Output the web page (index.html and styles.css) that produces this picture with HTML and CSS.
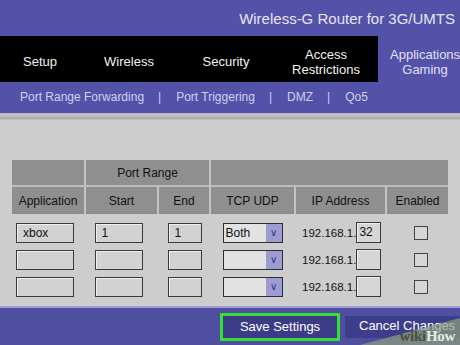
FILE: index.html
```html
<!DOCTYPE html>
<html lang="en">
<head>
    <meta charset="UTF-8">
    <title>Applications &amp; Gaming</title>
    <link rel="stylesheet" href="styles.css">
</head>
<body>
    <div class="page">
        <div class="top">Wireless-G Router for 3G/UMTS</div>

        <div class="nav">
            <div class="tabs">
                <div class="tab w-setup">Setup</div>
                <div class="tab w-wireless">Wireless</div>
                <div class="tab w-security">Security</div>
                <div class="tab w-access">Access<br>Restrictions</div>
            </div>
            <div class="tab active">Applications<br>Gaming</div>
        </div>

        <div class="subnav">
            <span>Port Range Forwarding</span><span class="sep">|</span>
            <span>Port Triggering</span><span class="sep">|</span>
            <span>DMZ</span><span class="sep">|</span>
            <span>Qo5</span>
        </div>

        <div class="strip"></div>

        <div class="content">
            <table class="ports">
                <colgroup>
                    <col style="width: 73px">
                    <col style="width: 73px">
                    <col style="width: 52px">
                    <col style="width: 85px">
                    <col style="width: 91px">
                    <col style="width: 62px">
                </colgroup>
                <tr class="head1">
                    <th class="first"></th>
                    <th colspan="2">Port Range</th>
                    <th colspan="3"></th>
                </tr>
                <tr class="head2">
                    <th class="first">Application</th>
                    <th>Start</th>
                    <th>End</th>
                    <th>TCP UDP</th>
                    <th>IP Address</th>
                    <th>Enabled</th>
                </tr>
                <tr class="gap"><td colspan="6"></td></tr>
                <tr>
                    <td><div class="box app">xbox</div></td>
                    <td class="c"><div class="box start">1</div></td>
                    <td class="c"><div class="box end">1</div></td>
                    <td class="c"><div class="sel"><span>Both</span><i>&#8744;</i></div></td>
                    <td><div class="ip">192.168.1.<div class="box oct">32</div></div></td>
                    <td class="c"><div class="check"></div></td>
                </tr>
                <tr>
                    <td><div class="box app"></div></td>
                    <td class="c"><div class="box start"></div></td>
                    <td class="c"><div class="box end"></div></td>
                    <td class="c"><div class="sel"><span></span><i>&#8744;</i></div></td>
                    <td><div class="ip">192.168.1.<div class="box oct"></div></div></td>
                    <td class="c"><div class="check"></div></td>
                </tr>
                <tr>
                    <td><div class="box app"></div></td>
                    <td class="c"><div class="box start"></div></td>
                    <td class="c"><div class="box end"></div></td>
                    <td class="c"><div class="sel"><span></span><i>&#8744;</i></div></td>
                    <td><div class="ip">192.168.1.<div class="box oct"></div></div></td>
                    <td class="c"><div class="check"></div></td>
                </tr>
            </table>
        </div>

        <div class="footer">
            <button class="save">Save Settings</button>
            <button class="cancel">Cancel Changes</button>
        </div>

        <div class="watermark">
            <svg width="100" height="36" viewBox="0 0 100 36">
                <polygon points="0,36 100,9 100,36" fill="#8fa07a" fill-opacity="0.7"/>
            </svg>
            <span class="wm-text"><b class="wiki">wiki</b><b class="how">How</b></span>
        </div>
    </div>
</body>
</html>
```

FILE: styles.css
```css
body {
    margin: 0;
    font-family: 'Liberation Sans', Arial, sans-serif;
    background-color: #cdcdcd;
    overflow: hidden;
}

.page {
    position: relative;
    width: 460px;
    height: 345px;
    overflow: hidden;
    display: flex;
    flex-direction: column;
}

.top {
    flex-shrink: 0;
    height: 36px;
    background-color: #5451a8;
    color: #e6e6f6;
    font-size: 15px;
    text-align: right;
    padding-right: 5px;
    padding-top: 2px;
    line-height: 34px;
    box-sizing: border-box;
}

.nav {
    flex-shrink: 0;
    display: flex;
    height: 46px;
}

.tabs {
    display: flex;
    width: 378px;
    background-color: #000;
}

.tab {
    display: flex;
    align-items: center;
    justify-content: center;
    text-align: center;
    color: #f2f2f2;
    font-size: 13px;
    line-height: 15px;
    padding-top: 5px;
}

.w-setup { width: 80px; }
.w-wireless { width: 98px; }
.w-security { width: 96px; }
.w-access { width: 104px; }

.tab.active {
    flex: 1;
    background-color: #5451a8;
    color: #e0e0f4;
    justify-content: flex-start;
    padding-left: 12px;
    white-space: nowrap;
}

.subnav {
    flex-shrink: 0;
    height: 31px;
    background-color: #5451a8;
    color: #cfd0f2;
    font-size: 12px;
    display: flex;
    align-items: center;
    padding-left: 20px;
    padding-bottom: 1px;
    box-sizing: border-box;
}

.subnav .sep {
    margin: 0 15px 0 14px;
}

.strip {
    flex-shrink: 0;
    height: 7px;
    background: linear-gradient(to bottom, #b4b4c4 0, #c4c4c4 3px, #a8a8a8 5px, #c6c6c6 7px);
}

.content {
    flex: 1;
    min-height: 0;
    overflow: hidden;
    padding: 40px 12px 0;
}

.ports {
    border-collapse: collapse;
    table-layout: fixed;
    width: 436px;
}

.ports th {
    background-color: #8f8f8f;
    color: #111;
    font-weight: normal;
    font-size: 12px;
    border-left: 2px solid #c4c4c4;
    padding: 0;
}

.ports th.first {
    border-left: none;
}

.head1 th {
    height: 25px;
    border-bottom: 2px solid #bdbdbd;
}

.head2 th {
    height: 27px;
}

.ports td {
    height: 27px;
    padding: 0;
    font-size: 12px;
    color: #111;
}

.ports .gap td {
    height: 5px;
}

.ports td.c {
    text-align: center;
}

.box {
    display: inline-block;
    vertical-align: middle;
    box-sizing: border-box;
    height: 20px;
    border: 1px solid #3a3a3a;
    box-shadow: inset 1px 1px 0 #f0f0f0;
    background-color: #d2d2d2;
    font-size: 12px;
    line-height: 18px;
    text-align: left;
    padding-left: 6px;
}

.box.app {
    width: 58px;
    margin-left: 4px;
}

.box.start {
    width: 48px;
    margin-right: 6px;
}

.box.end {
    width: 34px;
    margin-left: 1px;
}

.sel {
    display: inline-flex;
    vertical-align: middle;
    width: 60px;
    height: 20px;
    box-sizing: border-box;
    border: 1px solid #2e2e2e;
    background-color: #e2e2e2;
    text-align: left;
}

.sel span {
    flex: 1;
    padding-left: 2px;
    font-size: 12px;
    line-height: 18px;
}

.sel i {
    width: 16px;
    background-color: #9c9cd2;
    color: #33337a;
    font-style: normal;
    font-size: 10px;
    line-height: 18px;
    text-align: center;
}

.ip {
    display: flex;
    align-items: center;
    padding-left: 7px;
    font-size: 11.5px;
}

.box.oct {
    width: 25px;
    height: 21px;
    padding-left: 2px;
    margin-left: 0;
    background-color: #d6d6d6;
}

.check {
    display: inline-block;
    vertical-align: middle;
    width: 14px;
    height: 14px;
    margin-left: 8px;
    box-sizing: border-box;
    border: 1px solid #444;
    background-color: #d6d6d6;
}

.footer {
    flex-shrink: 0;
    height: 39px;
    background-color: #4f4ea0;
    border-top: 2px solid #9e9ed8;
    box-sizing: border-box;
    display: flex;
    align-items: center;
    padding-left: 220px;
    gap: 5px;
}

.footer button {
    flex-shrink: 0;
    box-sizing: border-box;
    font-family: 'Liberation Sans', Arial, sans-serif;
    font-size: 13px;
    color: #fff;
    cursor: pointer;
}

.save {
    width: 120px;
    height: 28px;
    background-color: #3c3b88;
    border: 3px solid #33e033;
    padding: 0;
}

.cancel {
    width: 130px;
    height: 22px;
    background-color: #3e3d8c;
    border: none;
    text-align: left;
    padding-left: 14px;
    padding-bottom: 3px;
    white-space: nowrap;
}

.watermark {
    position: absolute;
    right: 0;
    bottom: 0;
    width: 100px;
    height: 36px;
    pointer-events: none;
}

.watermark svg {
    display: block;
}

.wm-text {
    position: absolute;
    right: 5px;
    bottom: 0;
    font-family: 'Liberation Serif', 'Times New Roman', serif;
    font-size: 15px;
    letter-spacing: -0.3px;
}

.wiki {
    color: #4a5040;
}

.how {
    color: #e8ece0;
}
```
